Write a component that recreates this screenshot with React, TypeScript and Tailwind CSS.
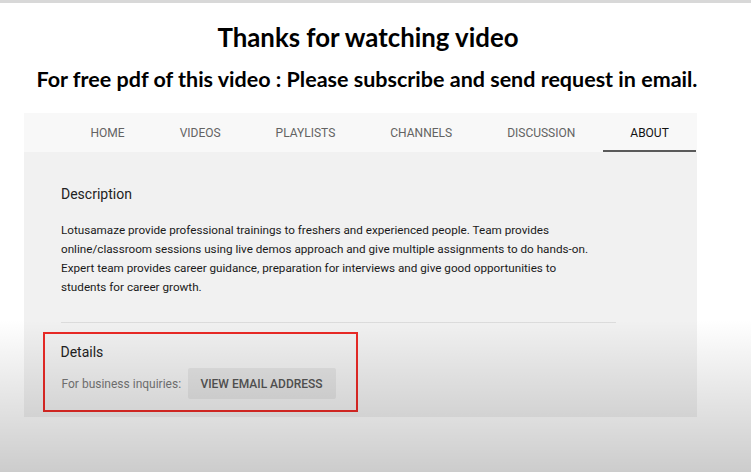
import React from "react";

const tabs = ["HOME", "VIDEOS", "PLAYLISTS", "CHANNELS", "DISCUSSION"];

export default function App() {
  return (
    <div className="relative w-[751px] h-[472px] overflow-hidden bg-white">
      <div className="h-[3px] bg-[#d8d8d8]" />
      <div className="flex flex-col items-center pt-[19px]">
        <h1 className="ml-[-15px] font-['Lato',sans-serif] font-bold text-[25.8px] leading-[30px] text-black">
          Thanks for watching video
        </h1>
        <p className="mt-[14px] ml-[-17px] font-['Lato',sans-serif] font-bold text-[21.5px] leading-[26px] text-black">
          For free pdf of this video : Please subscribe and send request in email.
        </p>
      </div>
      <div className="ml-[24px] mt-[21px] w-[673px] h-[304px] overflow-hidden bg-[#f1f1f1] font-['Roboto',sans-serif]">
        <div className="flex h-[39px] bg-[#f8f8f8] pl-[39px] text-[12px] text-[#636363]">
          {tabs.map((t) => (
            <div key={t} className="flex items-center px-[27.5px]">
              {t}
            </div>
          ))}
          <div className="flex items-center px-[27.5px] border-b-2 border-[#5a5a5a] text-[#111] pt-[2px]">
            ABOUT
          </div>
        </div>
        <div className="px-[37px]">
          <div className="pt-[33px] text-[14px] leading-[18px] text-[#222]">Description</div>
          <p className="mt-[18px] w-[580px] text-[11.7px] leading-[18.9px] text-[#1a1a1a]">
            Lotusamaze provide professional trainings to freshers and experienced people. Team provides
            <br />
            online/classroom sessions using live demos approach and give multiple assignments to do hands-on.
            <br />
            Expert team provides career guidance, preparation for interviews and give good opportunities to
            <br />
            students for career growth.
          </p>
          <div className="mt-[25px] w-[555px] h-px bg-[#dcdcdc]" />
          <div className="ml-[-18px] mt-[9px] w-[315px] h-[80px] border-[2.5px] border-[#ea2a26] px-[15.5px] pt-[9.5px]">
            <div className="text-[14px] leading-[18px] text-[#222]">Details</div>
            <div className="mt-[7px] flex items-center">
              <span className="text-[12px] text-[#777] w-[127px] pl-[1px]">For business inquiries:</span>
              <div className="flex items-center justify-center w-[148px] h-[31px] bg-[#e3e3e3] rounded-[2px] text-[12px] font-medium text-[#555]">
                VIEW EMAIL ADDRESS
              </div>
            </div>
          </div>
        </div>
      </div>
      <div className="pointer-events-none absolute left-0 right-0 top-[320px] bottom-0 bg-gradient-to-b from-[rgba(0,0,0,0)] to-[rgba(0,0,0,0.2)]" />
    </div>
  );
}
